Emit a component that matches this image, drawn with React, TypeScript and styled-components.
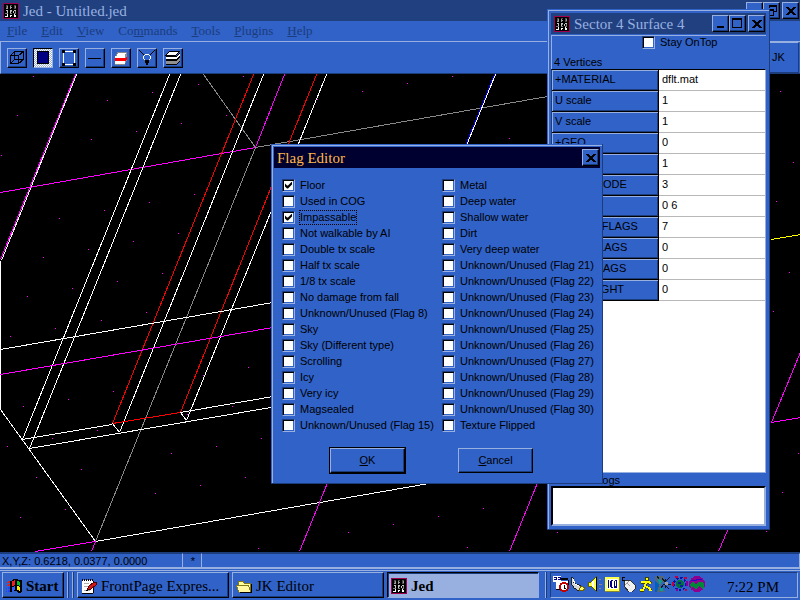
import React from "react";
import styled, { createGlobalStyle, css } from "styled-components";

const c = {
  face: "#3062c8",
  light: "#98b0e0",
  dark: "#1c3c7c",
  title: "#204080",
  navy: "#000030",
  gold: "#ffb848",
};
const sans = `"Liberation Sans", Arial, sans-serif`;
const serif = `"Liberation Serif", "Times New Roman", serif`;

const GlobalStyle = createGlobalStyle`
  *, *::before, *::after { box-sizing: border-box; }
  body { margin: 0; background: #000; font: 11px/13px ${sans}; color: #000; }
  button, input, textarea { font: inherit; color: inherit; margin: 0; padding: 0; }
`;

const raised = css`
  border: 1px solid;
  border-color: ${c.light} #000 #000 ${c.light};
  box-shadow: inset -1px -1px ${c.dark};
`;

const Desktop = styled.div`
  position: relative;
  display: flex;
  flex-direction: column;
  height: 100vh;
  overflow: hidden;
`;

/* ---------- shared window parts ---------- */

const TitleBar = styled.header<{ $active?: boolean }>`
  display: flex;
  align-items: center;
  flex: none;
  gap: 4px;
  height: 21px;
  padding: 0 1px 0 3px;
  background: ${(p) => (p.$active ? c.navy : c.title)};
  color: ${(p) => (p.$active ? c.gold : c.light)};
  font: 15px/20px ${serif};
`;

const Caption = styled.h1`
  flex: 1;
  margin: 0;
  font: inherit;
  white-space: nowrap;
`;

const CaptionButtons = styled.div`
  display: flex;
  & > :last-child { margin-left: 2px; }
`;

const CaptionButton = styled.button`
  ${raised}
  display: grid;
  place-items: center;
  width: 17px;
  height: 17px;
  background: ${c.face};
  color: #000;
`;

const Floating = styled.section`
  position: absolute;
  display: flex;
  flex-direction: column;
  padding: 4px;
  background: ${c.face};
  box-shadow: inset -1px -1px ${c.dark}, inset 1px 1px ${c.face}, inset 2px 2px ${c.light};
`;

/* ---------- main window ---------- */

const MenuBar = styled.nav`
  display: flex;
  flex: none;
  height: 20px;
  background: ${c.face};
`;

const MenuItem = styled.button`
  border: 0;
  padding: 0 7px;
  background: none;
  color: ${c.dark};
  font: 13px/20px ${serif};
`;

const Toolbar = styled.div`
  display: flex;
  flex: none;
  justify-content: space-between;
  height: 33px;
  border-top: 1px solid ${c.light};
  border-left: 1px solid ${c.light};
  border-bottom: 1px solid ${c.dark};
  background: ${c.face};
`;

const ToolGroup = styled.div`
  display: flex;
  align-items: center;
  gap: 6px;
  padding-left: 6px;
`;

const ToolButton = styled.button<{ $pressed?: boolean }>`
  ${raised}
  display: grid;
  place-items: center;
  width: 20px;
  height: 20px;
  background: ${c.face};
  ${(p) =>
    p.$pressed &&
    css`
      border-color: #000 ${c.light} ${c.light} #000;
      box-shadow: none;
      background: repeating-conic-gradient(#fff 0 25%, ${c.light} 0 50%) 0 0 / 2px 2px;
    `}
`;

const ModePanel = styled.div`
  display: flex;
  align-items: center;
  width: 60px;
  margin-right: 1px;
  padding-left: 32px;
  border: 1px solid;
  border-color: ${c.light} ${c.dark} ${c.dark} ${c.light};
`;

const Viewport = styled.main`
  flex: 1;
  min-height: 0;
  background: #000;
  & > svg { display: block; width: 100%; height: 100%; }
`;

const StatusBar = styled.footer`
  display: flex;
  flex: none;
  height: 17px;
  border-top: 1px solid ${c.dark};
  border-bottom: 2px solid ${c.light};
  background: ${c.face};
  line-height: 15px;
`;

const StatusCell = styled.div<{ $width?: number }>`
  flex: ${(p) => (p.$width ? `0 0 ${p.$width}px` : "1")};
  padding-left: 2px;
  border-right: 1px solid ${c.light};
  border-top: 1px solid ${c.dark};
  ${(p) => p.$width && p.$width < 50 && "text-align: center;"}
`;

/* ---------- task bar ---------- */

const TaskBar = styled.footer`
  display: flex;
  flex: none;
  height: 31px;
  padding: 3px 2px 2px;
  background: ${c.face};
  box-shadow: inset 0 1px ${c.face}, inset 0 2px ${c.light};
  & > * + * { margin-left: 3px; }
`;

const TaskButton = styled.button<{ $pressed?: boolean; $strong?: boolean; $compact?: boolean }>`
  ${raised}
  display: flex;
  align-items: center;
  gap: 4px;
  flex: ${(p) => (p.$compact ? "0 0 62px" : "0 1 152px")};
  padding: 2px 3px 0;
  background: ${c.face};
  font: ${(p) => (p.$strong ? "bold " : "")}15px/20px ${serif};
  white-space: nowrap;
  ${(p) =>
    p.$pressed &&
    css`
      border-color: #000 ${c.light} ${c.light} #000;
      box-shadow: inset 1px 1px ${c.dark};
      background: ${c.light};
    `}
`;

const Grip = styled.span`
  flex: none;
  width: 2px;
  border-left: 1px solid ${c.light};
  border-right: 1px solid ${c.dark};
`;

const TrayGroup = styled.div`
  display: flex;
  flex: none;
  gap: 3px;
  && { margin-left: auto; }
`;

const Tray = styled.div`
  display: flex;
  align-items: center;
  flex: none;
  gap: 1px;
  width: 248px;
  padding: 0 18px 3px 2px;
  border: 1px solid;
  border-color: ${c.dark} ${c.light} ${c.light} ${c.dark};
`;

const Clock = styled.time`
  margin: 6px 0 0 auto;
  font: 15px/16px ${serif};
`;

/* ---------- surface window ---------- */

const SurfaceWindow = styled(Floating)`
  left: 547px;
  top: 9px;
  width: 223px;
  height: 521px;
`;

const SurfaceHead = styled.div`
  display: flex;
  flex-direction: column;
  justify-content: space-between;
  height: 34px;
  margin-top: 1px;
  padding-left: 2px;
  border-top: 1px solid ${c.light};
  border-left: 1px solid ${c.light};
`;

const StayLabel = styled.label`
  display: flex;
  align-items: center;
  gap: 5px;
  padding-left: 88px;
`;

const GridFrame = styled.div`
  flex: 1;
  background: #fff;
  border: 1px solid;
  border-color: #000 ${c.light} ${c.light} ${c.dark};
`;

const PropTable = styled.table`
  width: 100%;
  border-collapse: separate;
  border-spacing: 0;
  table-layout: fixed;
  line-height: 16px;
  th, td {
    height: 21px;
    padding: 0 0 2px 3px;
    text-align: left;
    font-weight: normal;
    white-space: nowrap;
  }
  th {
    width: 107px;
    border-right: 1px solid #000;
    border-bottom: 1px solid #000;
    background: ${c.face};
    box-shadow: inset 1px 1px ${c.light}, inset -1px -1px ${c.dark};
  }
  td { border-bottom: 1px solid #b8b8b8; }
`;

const CogsLabel = styled.label`
  height: 13px;
  padding-left: 3px;
  line-height: 15px;
`;

const CogsBox = styled.textarea`
  height: 40px;
  resize: none;
  outline: 0;
  background: #fff;
  border: 2px solid;
  border-color: #000 ${c.light} ${c.light} #000;
`;

/* ---------- flag dialog ---------- */

const FlagDialog = styled(Floating)`
  left: 271px;
  top: 144px;
  width: 332px;
  height: 340px;
  padding: 3px;
  box-shadow: inset -1px -1px ${c.dark}, inset 1px 1px ${c.face}, inset 2px 2px ${c.light};
`;

const FlagColumns = styled.div`
  display: grid;
  grid-template-columns: 160px 1fr;
  padding: 9px 0 0 8px;
`;

const FlagList = styled.ul`
  margin: 0;
  padding: 0;
  list-style: none;
`;

const FlagLabel = styled.label<{ $focused?: boolean }>`
  display: flex;
  align-items: center;
  gap: 5px;
  height: 16px;
  white-space: nowrap;
  & > span { outline: ${(p) => (p.$focused ? "1px dotted #000" : "0")}; }
`;

const CheckBox = styled.input.attrs({ type: "checkbox" })`
  appearance: none;
  flex: none;
  width: 13px;
  height: 13px;
  border: 1px solid;
  border-color: ${c.dark} ${c.light} ${c.light} ${c.dark};
  background: #fff;
  box-shadow: inset 1px 1px #000, inset -1px -1px ${c.face};
  &:checked::before {
    content: "";
    display: block;
    width: 7px;
    height: 7px;
    margin: 2px;
    background: #000;
    clip-path: polygon(0 2px, 2px 4px, 3px 4px, 7px 0, 7px 3px, 3px 7px, 2px 7px, 0 5px);
  }
`;

const DialogButtons = styled.div`
  display: flex;
  gap: 53px;
  padding: 15px 0 0 56px;
`;

const PushButton = styled.button<{ $default?: boolean }>`
  ${raised}
  width: 75px;
  height: 25px;
  background: ${c.face};
  outline: ${(p) => (p.$default ? "1px solid #000" : "0")};
`;

/* ---------- icons ---------- */

const Svg = ({ s = 16, children }: { s?: number; children: React.ReactNode }) => (
  <svg width={s} height={s} viewBox={`0 0 ${s} ${s}`} shapeRendering="crispEdges" fill="none" aria-hidden="true">
    {children}
  </svg>
);

const JedLogo = () => (
  <Svg>
    <rect width="16" height="16" fill="#a00050" />
    <rect x="1" y="1" width="14" height="14" fill="#000" />
    <path d="M3 2h2v3H3zM7 2h2v1H7zM11 2h2v4h-2z" fill="#505050" />
    <path d="M4 3h1v3H4zM7 3h1v3H7zM8 4h1v1H8zM12 3h1v2h-1zM3 5h1v1H3z" fill="#a0a0a0" />
    <path d="M3 7h2v1H3zM4 8h1v2H4zM7 7h2v1H7zM7 8h1v2H7zM11 7h2v1h-2zM10 8h1v2h-1z" fill="#c8c8c8" />
    <path d="M2 10h3v1H2zM7 10h2v1H7zM11 10h2v1h-2zM12 8h1v2h-1zM8 8h1v1H8z" fill="#808080" />
    <path d="M4 11h1v3H4zM2 13h2v1H2zM7 12h1v2H7zM8 12h1v1H8zM11 11h1v3h-1zM12 12h1v2h-1z" fill="#fff" />
  </Svg>
);

const CloseGlyph = () => (
  <Svg s={10}>
    <path d="M0 0h3v1h1v1h2V1h1V0h3v1H9v1H8v1H7v2h1v1h1v1h1v1H7V7H6V6H4v1H3v1H0V7h1V6h1V5h1V3H2V2H1V1H0z" fill="#000" transform="translate(0 1)" />
  </Svg>
);
const MinGlyph = () => (
  <Svg s={11}>
    <path d="M2 8h7v2H2z" fill="#000" />
  </Svg>
);
const MaxGlyph = () => (
  <Svg s={11}>
    <path d="M0 0h10v10H0zM1 2v7h8V2z" fill="#000" fillRule="evenodd" />
  </Svg>
);
const RestoreGlyph = () => (
  <Svg s={11}>
    <path d="M3 0h8v7H8V6h2V2H4v1H3zM0 4h8v7H0zM1 6v4h6V6z" fill="#000" fillRule="evenodd" />
  </Svg>
);

const toolIcons: { name: string; pressed?: boolean; art: React.ReactNode }[] = [
  {
    name: "Sectors",
    art: <path d="M1.5 5.500h8v8h-8zM5.500 1.500h9v8h-9zM1.500 5.500l4-4M9.500 5.500l5-4M9.500 13.500l5-4M1.500 13.500l4-4" stroke="#000" />,
  },
  { name: "Surfaces", pressed: true, art: <path d="M2.500 1.500h11v12h-11z" fill="#000080" stroke="#000" /> },
  {
    name: "Vertices",
    art: (
      <>
        <path d="M2.500 1.500h11v13h-11z" stroke="#fff" />
        <path d="M1 0h3v3H1zM12 0h3v3h-3zM1 13h3v3H1zM12 13h3v3h-3z" fill="#000" />
      </>
    ),
  },
  { name: "Edges", art: <path d="M1 8h13v1H1z" fill="#000" /> },
  {
    name: "Things",
    art: (
      <>
        <path d="M5 2h9l-2 4H3z" fill="#fff" stroke="#888" />
        <path d="M2 6h10v8H2z" fill="#fff" />
        <path d="M12 6l2-4v8l-2 4z" fill="#909090" />
        <path d="M2 8h10l2-2v3l-2 2H2z" fill="#f00" />
        <path d="M2 14h10" stroke="#888" />
      </>
    ),
  },
  {
    name: "Lights",
    art: (
      <>
        <path d="M0 0h1v1h1v1h1v1h1v1h1v1H4V4H3V3H2V2H1V1H0zM15 0h1v1h-1v1h-1v1h-1v1h-1v1h-1V4h1V3h1V2h1V1h1z" fill="#000" />
        <path d="M6 4h4v1h1v1h1v3h-1v1h-1v1H6v-1H5V9H4V6h1V5h1z" fill="#fff" />
        <path d="M6 5h4v1h1v3h-1v1H6V9H5V6h1z" fill={c.face} />
        <path d="M6 10h4v3H9v2H7v-2H6z" fill="#000" />
      </>
    ),
  },
  {
    name: "Layers",
    art: (
      <>
        <path d="M5 1h10l-4 4H1z" fill="#fff" stroke="#000" />
        <path d="M1 7h10l4-4v2l-4 4H1z" fill="#fff" />
        <path d="M1 6h10l4-4v1l-4 4H1zM1 9h10l4-4v2l-4 4H1z" fill="#000" />
        <path d="M1 11h10l4-4v3l-4 4H1z" fill="#909090" />
        <path d="M1 14h10l4-4v1l-4 4H1z" fill="#000" />
      </>
    ),
  },
];

const WindowsLogo = () => (
  <Svg>
    <path d="M0 4h1v1H0zM2 3h2v2H2zM0 7h1v1H0zM2 6h2v2H2z" fill="#e02020" />
    <path d="M0 10h1v1H0zM2 9h2v2H2zM0 13h1v1H0zM2 12h2v2H2z" fill="#2040ff" />
    <path d="M5 3l3-2h3l2 1h3v12l-3 1-3-2H7l-3 1V3z" fill="#000" />
    <path d="M6 3l3-1v5l-3 1z" fill="#f02020" />
    <path d="M11 3l3 1v4l-3-1z" fill="#00c020" />
    <path d="M6 9l3-1v4l-3 1z" fill="#3060ff" />
    <path d="M11 8l3 1v4l-3-1z" fill="#ffe800" />
  </Svg>
);
const NotepadIcon = () => (
  <Svg>
    <path d="M1 2h11v13H1z" fill="#fff" />
    <path d="M1 15h11v1H1zM12 3h1v12h-1z" fill="#000" />
    <path d="M1 1h1v2H1zM3 1h1v2H3zM5 1h1v2H5zM7 1h1v2H7zM9 1h1v2H9zM11 1h1v2h-1z" fill="#000" />
    <path d="M3 5h5M3 8h4M3 12h6" stroke="#b0b0b0" />
    <path d="M6 12l2-4 5-4h2v3l-5 4z" fill="#d01818" stroke="#500" />
    <path d="M5 12h2v1H5z" fill="#000" />
  </Svg>
);
const FolderIcon = () => (
  <Svg>
    <path d="M2 3h5l1 2h6v9H3z" fill="#ffff98" stroke="#807820" />
    <path d="M0 7h12l3 7H3z" fill="#fff8a0" stroke="#807820" />
    <path d="M3 14h12v1H4zM15 6h1v9h-1z" fill="#000" />
  </Svg>
);

const trayIcons: { name: string; art: React.ReactNode }[] = [
  {
    name: "Task Scheduler",
    art: (
      <>
        <path d="M0 0h8v6H0zM3 5h12v8H3z" fill="#fff" />
        <path d="M1 1h2v1H1zM1 3h2v1H1zM5 1h2v1H5zM5 3h2v1H5zM3 1h1v3H3zM7 1h1v3H7z" fill="#000080" />
        <path d="M8 2h7v2H8zM3 13h7v1H3zM15 4h1v5h-1z" fill="#000" />
        <circle cx="11" cy="11" r="4" fill="#fff" stroke="#c00000" strokeWidth="2" />
        <path d="M11 9v3h2" stroke="#000" />
      </>
    ),
  },
  {
    name: "Network",
    art: (
      <>
        <path d="M1 1l2 1 1 5 7 3 2 4-4 1-5-3-3-5z" fill="#d8d8d8" stroke="#202020" />
        <path d="M3 3l2 5 4 2" stroke="#fff" />
        <path d="M11 10l4 2-2 3-4-1z" fill="#ffff60" stroke="#706000" />
      </>
    ),
  },
  {
    name: "Volume",
    art: (
      <>
        <path d="M1 6h3l5-5v14l-5-5H1z" fill="#ffff40" stroke="#606000" />
        <path d="M9 1v14" stroke="#000" />
        <path d="M6 5v6" stroke="#fff" strokeWidth="2" />
        <path d="M12 4l2-1M12 8h3M12 12l2 1" stroke="#888" />
      </>
    ),
  },
  {
    name: "ICQ",
    art: (
      <>
        <path d="M1 1h15v15H1z" fill="#888830" />
        <path d="M1 1h14v14H1z" fill="#ffff50" />
        <path d="M3 3h11v10H3z" fill="#fff" />
        <path d="M4 4h1v8H4zM7 4h2v1H8v6h1v1H7V11H6V5h1zM11 4h2v8h-3V5h1z" fill="#000080" />
        <path d="M11 5h1v5h-1z" fill="#fff" />
      </>
    ),
  },
  {
    name: "Mouse",
    art: (
      <>
        <path d="M1 1h3v1H2v2h4v2H5V5H1z" fill="#000" />
        <path d="M4 5l5-1 5 5v4l-3 3H8L3 10z" fill="#f0f0f0" stroke="#303030" />
        <path d="M4 9l4-4M6 7l3 3" stroke="#a0a0a0" />
      </>
    ),
  },
  {
    name: "Instant Messenger",
    art: (
      <>
        <circle cx="9" cy="3" r="2" fill="#ffff00" stroke="#404000" />
        <path d="M3 6h8l2 2M8 6L7 10l4 2 2 3M7 10l-2 4H2" stroke="#404000" strokeWidth="3" />
        <path d="M3 6h8l2 2M8 6L7 10l4 2 2 3M7 10l-2 4H2" stroke="#ffff00" strokeWidth="2" />
      </>
    ),
  },
  {
    name: "Monitor",
    art: (
      <>
        <path d="M0 0h9v5l-3 4 4 7H0z" fill="#506878" />
        <path d="M0 5l4 4-2 7H0z" fill="#0060c0" />
        <path d="M3 3l4 2-2 4zM5 12h3v3H5z" fill="#00a0a0" />
        <path d="M2 0l2 3M7 2l3 4 5-5M8 8h8M9 8l5 5M6 12l3-4M10 3v9" stroke="#101820" />
        <path d="M10 6h3v3h-3z" fill="#a0a0a0" />
      </>
    ),
  },
  {
    name: "Globe",
    art: (
      <>
        <circle cx="8" cy="8" r="6" stroke="#1010a0" strokeWidth="2" strokeDasharray="2 2" />
        <circle cx="8" cy="8" r="4" fill="#007040" />
        <path d="M6 6h3v2H6zM8 9h3v2H8z" fill="#0020a0" />
        <path d="M3 0h3v2H3zM12 1h3v2h-3zM0 6h2v4H0zM13 13h2v2h-2z" fill="#c00040" />
        <path d="M14 5h2v5h-2zM4 13h2v2H4z" fill="#8000a0" />
      </>
    ),
  },
  {
    name: "Modem",
    art: (
      <>
        <circle cx="8" cy="8" r="8" fill="#900090" />
        <path d="M1 8l3-2 3 3 2-3h4l2 2v3l-2 2-3-3-2 3H6l-2-2-2 1z" fill="#008838" />
        <path d="M2 4l4 1 3-2 4 1" stroke="#3000c0" />
      </>
    ),
  },
];

/* ---------- wireframe view ---------- */

const lines: [string, number, number, number, number][] = [
  ["#f0f", 75, 74, 0, 259],
  ["#fff", 76, 74, 1, 260],
  ["#fff", 0, 260, 0, 409],
  ["#fff", 0, 409, 95, 541],
  ["#f0f", 0, 192, 255, 147],
  ["#f0f", 284, 74, 255, 147],
  ["#888", 203, 74, 255, 147],
  ["#888", 255, 147, 547, 96],
  ["#888", 255, 147, 95, 541],
  ["#fff", 169, 74, 22, 439],
  ["#fff", 180, 74, 29, 448],
  ["#f00", 253, 74, 112, 423],
  ["#fff", 263, 74, 119, 432],
  ["#f00", 316, 74, 180, 412],
  ["#fff", 326, 74, 186, 420],
  ["#fff", 22, 439, 112, 424],
  ["#f00", 112, 423, 180, 412],
  ["#fff", 180, 412, 400, 374],
  ["#fff", 29, 448, 400, 385],
  ["#fff", 112, 423, 119, 432],
  ["#fff", 180, 412, 186, 420],
  ["#fff", 0, 349, 400, 280],
  ["#f0f", 0, 374, 400, 305],
  ["#fff", 95, 541, 440, 481],
  ["#f0f", 35, 551, 95, 541],
  ["#f0f", 95, 541, 91, 551],
  ["#00f", 494, 74, 465, 145],
  ["#fff", 495, 74, 466, 145],
  ["#f0f", 328, 480, 299, 551],
  ["#f0f", 538, 480, 509, 551],
  ["#f0f", 727, 530, 718, 551],
  ["#f0f", 771, 422, 860, 206],
  ["#f0f", 771, 422, 860, 407],
  ["#ff0", 771, 239, 860, 224],
];

const dots: [number, number][] = [];
for (let i = -14; i <= 20; i++) {
  for (let j = -10; j <= 14; j++) {
    if (i % 5 === 0 || j % 5 === 0) continue;
    const x = Math.round(255.300 + i * 45.060 - j * 16.170);
    const y = Math.round(146.600 - i * 7.930 + j * 39.350);
    if (x >= 0 && x < 900 && y >= 74 && y < 700) dots.push([x, y]);
  }
}

const Wireframe = () => (
  <svg shapeRendering="crispEdges" role="img" aria-label="Level wireframe">
    <g transform="translate(0 -74)">
      {dots.map(([x, y]) => (
        <rect key={`${x}-${y}`} x={x} y={y} width="1" height="1" fill="#f0f" />
      ))}
      {lines.map(([stroke, x1, y1, x2, y2], i) => (
        <line key={i} stroke={stroke} x1={x1 + 0.5} y1={y1 + 0.5} x2={x2 + 0.5} y2={y2 + 0.5} />
      ))}
    </g>
  </svg>
);

/* ---------- content ---------- */

const menus: [string, string, string][] = [
  ["", "F", "ile"],
  ["", "E", "dit"],
  ["", "V", "iew"],
  ["Co", "m", "mands"],
  ["", "T", "ools"],
  ["", "P", "lugins"],
  ["", "H", "elp"],
];

const properties: [string, string][] = [
  ["+MATERIAL", "dflt.mat"],
  ["U scale", "1"],
  ["V scale", "1"],
  ["+GEO", "0"],
  ["+LIGHT", "1"],
  ["+LIGHTMODE", "3"],
  ["ADJOIN", "0 6"],
  ["+ADJOINFLAGS", "7"],
  ["+SURFFLAGS", "0"],
  ["+FACEFLAGS", "0"],
  ["EXTRALIGHT", "0"],
];

const unknown = (n: number) => `Unknown/Unused (Flag ${n})`;
const flagColumns = [
  [
    "Floor", "Used in COG", "Impassable", "Not walkable by AI", "Double tx scale", "Half tx scale",
    "1/8 tx scale", "No damage from fall", unknown(8), "Sky", "Sky (Different type)", "Scrolling",
    "Icy", "Very icy", "Magsealed", unknown(15),
  ],
  [
    "Metal", "Deep water", "Shallow water", "Dirt", "Very deep water",
    ...[21, 22, 23, 24, 25, 26, 27, 28, 29, 30].map(unknown), "Texture Flipped",
  ],
];
const setFlags = ["Floor", "Impassable"];

export default function App() {
  return (
    <Desktop>
      <GlobalStyle />
      <TitleBar>
        <JedLogo />
        <Caption>Jed - Untitled.jed</Caption>
        <CaptionButtons>
          <CaptionButton aria-label="Minimize"><MinGlyph /></CaptionButton>
          <CaptionButton aria-label="Restore"><RestoreGlyph /></CaptionButton>
          <CaptionButton aria-label="Close"><CloseGlyph /></CaptionButton>
        </CaptionButtons>
      </TitleBar>
      <MenuBar>
        {menus.map(([a, key, b]) => (
          <MenuItem key={a + key + b}>{a}<u>{key}</u>{b}</MenuItem>
        ))}
      </MenuBar>
      <Toolbar>
        <ToolGroup>
          {toolIcons.map((t) => (
            <ToolButton key={t.name} aria-label={t.name} $pressed={t.pressed}>
              <Svg>{t.art}</Svg>
            </ToolButton>
          ))}
        </ToolGroup>
        <ModePanel>JK</ModePanel>
      </Toolbar>
      <Viewport><Wireframe /></Viewport>
      <StatusBar>
        <StatusCell $width={183}>X,Y,Z: 0.6218, 0.0377, 0.0000</StatusCell>
        <StatusCell $width={19}>*</StatusCell>
        <StatusCell />
      </StatusBar>
      <TaskBar>
        <TaskButton $strong $compact><WindowsLogo />Start</TaskButton>
        <Grip />
        <Grip />
        <TaskButton><NotepadIcon />FrontPage Expres...</TaskButton>
        <TaskButton><FolderIcon />JK Editor</TaskButton>
        <TaskButton $pressed $strong><JedLogo />Jed</TaskButton>
        <TrayGroup>
          <Grip />
          <Tray>
            {trayIcons.map((t) => <Svg key={t.name}>{t.art}</Svg>)}
            <Clock>7:22 PM</Clock>
          </Tray>
        </TrayGroup>
      </TaskBar>

      <SurfaceWindow aria-label="Sector 4 Surface 4">
        <TitleBar>
          <JedLogo />
          <Caption as="h2">Sector 4 Surface 4</Caption>
          <CaptionButtons>
            <CaptionButton aria-label="Minimize"><MinGlyph /></CaptionButton>
            <CaptionButton aria-label="Maximize"><MaxGlyph /></CaptionButton>
            <CaptionButton aria-label="Close"><CloseGlyph /></CaptionButton>
          </CaptionButtons>
        </TitleBar>
        <SurfaceHead>
          <StayLabel><CheckBox />Stay OnTop</StayLabel>
          <span>4 Vertices</span>
        </SurfaceHead>
        <GridFrame>
          <PropTable>
            <tbody>
              {properties.map(([name, value]) => (
                <tr key={name}>
                  <th scope="row">{name}</th>
                  <td>{value}</td>
                </tr>
              ))}
            </tbody>
          </PropTable>
        </GridFrame>
        <CogsLabel htmlFor="cogs">Used in Cogs</CogsLabel>
        <CogsBox id="cogs" readOnly />
      </SurfaceWindow>

      <FlagDialog role="dialog" aria-label="Flag Editor">
        <TitleBar $active>
          <Caption as="h2">Flag Editor</Caption>
          <CaptionButton aria-label="Close"><CloseGlyph /></CaptionButton>
        </TitleBar>
        <FlagColumns>
          {flagColumns.map((column, i) => (
            <FlagList key={i}>
              {column.map((flag) => (
                <li key={flag}>
                  <FlagLabel $focused={flag === "Impassable"}>
                    <CheckBox defaultChecked={setFlags.includes(flag)} />
                    <span>{flag}</span>
                  </FlagLabel>
                </li>
              ))}
            </FlagList>
          ))}
        </FlagColumns>
        <DialogButtons>
          <PushButton $default><u>O</u>K</PushButton>
          <PushButton><u>C</u>ancel</PushButton>
        </DialogButtons>
      </FlagDialog>
    </Desktop>
  );
}
